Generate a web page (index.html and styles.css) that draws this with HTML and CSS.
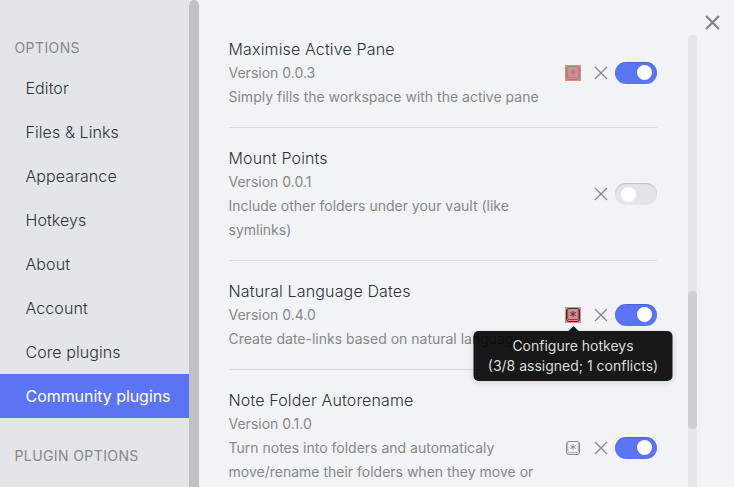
FILE: index.html
```
<!DOCTYPE html>
<html lang="en">
<head>
<meta charset="utf-8">
<title>Settings</title>
<link rel="stylesheet" href="styles.css">
</head>
<body>
<svg class="defs" aria-hidden="true">
  <symbol id="key" viewBox="0 0 16 16">
    <rect x="1.5" y="1.5" width="13" height="13" rx="2.5"/>
    <path d="M2.7 3v8.3q0 1.2 1.3 1.2h8q1.3 0 1.3-1.2V3" stroke-width=".65"/>
    <path d="M8 4.2v5.6M5.2 5.4l5.6 3.2M10.8 5.4L5.2 8.6" stroke-width=".9"/>
  </symbol>
  <symbol id="cross" viewBox="0 0 14 14"><path d="M1 1l12 12M13 1L1 13"/></symbol>
</svg>
<div class="modal">
  <nav class="sidebar">
    <div class="group">OPTIONS</div>
    <a class="tab">Editor</a>
    <a class="tab">Files &amp; Links</a>
    <a class="tab">Appearance</a>
    <a class="tab">Hotkeys</a>
    <a class="tab">About</a>
    <a class="tab">Account</a>
    <a class="tab">Core plugins</a>
    <a class="tab active">Community plugins</a>
    <div class="group second">PLUGIN OPTIONS</div>
  </nav>
  <div class="side-scroll"></div>
  <main class="content">
    <section class="item">
      <div class="info"><div class="name">Maximise Active Pane</div><div class="desc">Version 0.0.3</div><div class="desc">Simply fills the workspace with the active pane</div></div>
      <div class="controls"><span class="hotkey conflict"><svg><use href="#key"/></svg></span><svg class="remove"><use href="#cross"/></svg><span class="toggle on"></span></div>
    </section>
    <section class="item">
      <div class="info"><div class="name">Mount Points</div><div class="desc">Version 0.0.1</div><div class="desc">Include other folders under your vault (like<br>symlinks)</div></div>
      <div class="controls"><svg class="remove"><use href="#cross"/></svg><span class="toggle"></span></div>
    </section>
    <section class="item">
      <div class="info"><div class="name">Natural Language Dates</div><div class="desc">Version 0.4.0</div><div class="desc">Create date-links based on natural language</div></div>
      <div class="controls"><span class="hotkey conflict hover"><svg><use href="#key"/></svg><span class="tooltip">Configure hotkeys<br>(3/8 assigned; 1 conflicts)</span></span><svg class="remove"><use href="#cross"/></svg><span class="toggle on"></span></div>
    </section>
    <section class="item tall">
      <div class="info"><div class="name">Note Folder Autorename</div><div class="desc">Version 0.1.0</div><div class="desc">Turn notes into folders and automaticaly<br>move/rename their folders when they move or</div></div>
      <div class="controls"><span class="hotkey"><svg><use href="#key"/></svg></span><svg class="remove"><use href="#cross"/></svg><span class="toggle on"></span></div>
    </section>
  </main>
  <div class="scrollbar"><div class="thumb"></div></div>
  <div class="corner"><svg class="close"><use href="#cross"/></svg></div>
</div>
</body>
</html>
```
FILE: styles.css
```
* { box-sizing: border-box; }
body {
  margin: 0;
  height: 487px;
  overflow: hidden;
  background: #f2f3f5;
  color: #2e3338;
  font: 300 16px/24px Inter, sans-serif;
}
.defs { position: absolute; width: 0; height: 0; }
svg { fill: none; stroke: currentColor; display: block; }
.modal { display: flex; height: 487px; overflow: hidden; }
.sidebar { width: 189px; flex: none; padding-top: 36px; background: #e3e5e8; }
.group { height: 30px; padding-left: 14.5px; font-size: 14px; letter-spacing: .4px; color: #888; font-weight: 400; }
.group.second { margin-top: 26px; }
.tab { display: block; height: 44px; padding: 10px 0 10px 25.5px; letter-spacing: .08px; white-space: nowrap; }
.tab.active { background: #5b74f3; color: #fff; font-weight: 400; letter-spacing: -.05px; }
.side-scroll { width: 10px; flex: none; background: #c1c2c5; border-radius: 5px 5px 0 0; }
.content { width: 458px; flex: none; padding: 19px 0 0 29.5px; margin-right: 31px; }
.item { display: flex; align-items: center; padding: 18px 0; border-bottom: 1px solid #dadbdd; }
.item.tall .info { height: 120px; }
.info { flex: 1; white-space: nowrap; }
.name { font-size: 16px; letter-spacing: .15px; }
.desc { font-size: 14px; color: #888; font-weight: 400; }
.controls { display: flex; align-items: center; color: #888; }
.hotkey { position: relative; width: 16px; height: 16px; margin-right: 13px; }
.hotkey svg { width: 16px; height: 16px; }
.hotkey.conflict { background: #e78788; }
.hotkey.hover { color: #2e3338; }
.remove { width: 14px; height: 14px; margin-right: 7px; stroke-width: 1.25; }
.toggle { width: 42px; height: 22px; border-radius: 11px; padding: 4px 6px; background: #e3e5e8; box-shadow: inset 0 1px 1px rgba(0,0,0,.16); display: flex; }
.toggle::after { content: ""; width: 15px; height: 15px; border-radius: 50%; background: #fff; }
.toggle.on { background: #5b74f3; justify-content: flex-end; padding: 3px 5px; }
.tooltip {
  position: absolute;
  z-index: 2;
  top: 24px;
  left: 8px;
  transform: translateX(-50%);
  width: 199px;
  height: 50px;
  padding: 5px 0;
  border-radius: 5px;
  background: rgba(0,0,0,.9);
  box-shadow: 0 2px 6px rgba(0,0,0,.12);
  color: #dcddde;
  font-size: 14px;
  font-weight: 400;
  line-height: 20px;
  text-align: center;
  white-space: nowrap;
}
.tooltip::before { content: ""; position: absolute; left: 95px; top: -5px; border: 5px solid transparent; border-top: 0; border-bottom-color: rgba(0,0,0,.9); }
.scrollbar { width: 9px; flex: none; height: 460px; margin-top: 35px; padding-top: 256px; background: #e5e6e8; border-radius: 5px 5px 0 0; }
.thumb { height: 138px; border-radius: 5px; background: #cfcfd1; }
.corner { padding: 15px 0 0 8px; }
.close { width: 15px; height: 15px; stroke-width: 2; color: #7f8082; }
```
